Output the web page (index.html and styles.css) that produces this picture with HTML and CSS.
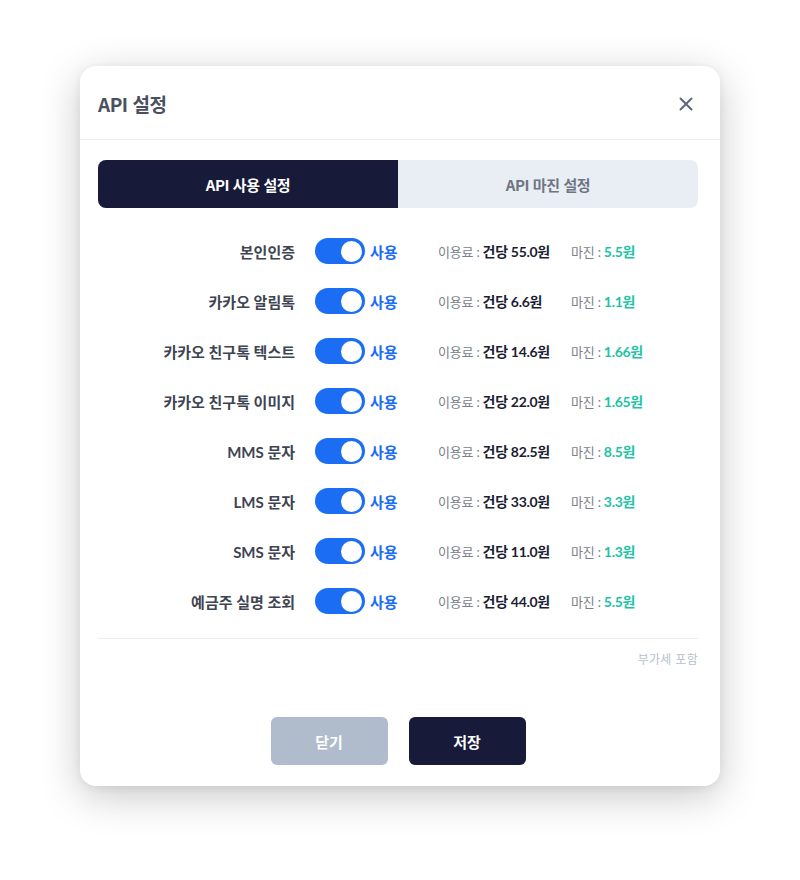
FILE: index.html
```html
<!DOCTYPE html>
<html lang="ko">
<head>
<meta charset="utf-8">
<link rel="stylesheet" href="styles.css">
</head>
<body>
<div class="page">
  <div class="modal">
    <div class="modal-header">
      <h2 class="modal-title">API 설정</h2>
      <button class="close-btn" aria-label="닫기">
        <svg width="14" height="14" viewBox="0 0 14 14"><path d="M1.5 1.5 L12.5 12.5 M12.5 1.5 L1.5 12.5" stroke="#5f6675" stroke-width="2" stroke-linecap="round" fill="none"/></svg>
      </button>
    </div>
    <div class="modal-body">
      <div class="tabs">
        <div class="tab active">API 사용 설정</div>
        <div class="tab">API 마진 설정</div>
      </div>
      <div class="rows">
        <div class="row"><span class="label">본인인증</span><span class="toggle"><span class="knob"></span></span><span class="status">사용</span><span class="fee"><span class="k">이용료 :</span> <b>건당 55.0원</b></span><span class="margin"><span class="k">마진 :</span> <b>5.5원</b></span></div>
        <div class="row"><span class="label">카카오 알림톡</span><span class="toggle"><span class="knob"></span></span><span class="status">사용</span><span class="fee"><span class="k">이용료 :</span> <b>건당 6.6원</b></span><span class="margin"><span class="k">마진 :</span> <b>1.1원</b></span></div>
        <div class="row"><span class="label">카카오 친구톡 텍스트</span><span class="toggle"><span class="knob"></span></span><span class="status">사용</span><span class="fee"><span class="k">이용료 :</span> <b>건당 14.6원</b></span><span class="margin"><span class="k">마진 :</span> <b>1.66원</b></span></div>
        <div class="row"><span class="label">카카오 친구톡 이미지</span><span class="toggle"><span class="knob"></span></span><span class="status">사용</span><span class="fee"><span class="k">이용료 :</span> <b>건당 22.0원</b></span><span class="margin"><span class="k">마진 :</span> <b>1.65원</b></span></div>
        <div class="row"><span class="label">MMS 문자</span><span class="toggle"><span class="knob"></span></span><span class="status">사용</span><span class="fee"><span class="k">이용료 :</span> <b>건당 82.5원</b></span><span class="margin"><span class="k">마진 :</span> <b>8.5원</b></span></div>
        <div class="row"><span class="label">LMS 문자</span><span class="toggle"><span class="knob"></span></span><span class="status">사용</span><span class="fee"><span class="k">이용료 :</span> <b>건당 33.0원</b></span><span class="margin"><span class="k">마진 :</span> <b>3.3원</b></span></div>
        <div class="row"><span class="label">SMS 문자</span><span class="toggle"><span class="knob"></span></span><span class="status">사용</span><span class="fee"><span class="k">이용료 :</span> <b>건당 11.0원</b></span><span class="margin"><span class="k">마진 :</span> <b>1.3원</b></span></div>
        <div class="row"><span class="label">예금주 실명 조회</span><span class="toggle"><span class="knob"></span></span><span class="status">사용</span><span class="fee"><span class="k">이용료 :</span> <b>건당 44.0원</b></span><span class="margin"><span class="k">마진 :</span> <b>5.5원</b></span></div>
      </div>
      <div class="note">부가세 포함</div>
      <div class="actions">
        <button class="btn btn-gray">닫기</button>
        <button class="btn btn-dark">저장</button>
      </div>
    </div>
  </div>
</div>
</body>
</html>
```

FILE: styles.css
```css
* { box-sizing: border-box; }
html, body {
  margin: 0;
  padding: 0;
  background: #ffffff;
  font-family: Lato, "Noto Sans CJK KR", sans-serif;
}
.page {
  width: 800px;
  height: 880px;
  padding-top: 66px;
  display: flex;
  justify-content: center;
  align-items: flex-start;
  background: #ffffff;
}
.modal {
  width: 640px;
  height: 720px;
  background: #ffffff;
  border-radius: 16px;
  box-shadow: 0 10px 40px rgba(0, 0, 0, 0.22), 0 2px 8px rgba(0,0,0,0.06);
  display: flex;
  flex-direction: column;
}
.modal-header {
  height: 74px;
  border-bottom: 1px solid #e9ecf1;
  display: flex;
  align-items: center;
  justify-content: space-between;
  padding: 2px 27px 0 18px;
}
.modal-title {
  margin: 0;
  font-family: "Noto Sans CJK KR", sans-serif;
  font-size: 19px;
  font-weight: 700;
  color: #4a505d;
  letter-spacing: -0.5px;
}
.close-btn {
  border: 0;
  background: none;
  padding: 0;
  width: 14px;
  height: 14px;
  display: flex;
  cursor: pointer;
}
.modal-body {
  flex: 1;
  padding: 20px 22px 21px 18px;
  display: flex;
  flex-direction: column;
}
.tabs {
  display: flex;
  height: 48px;
  border-radius: 8px;
  overflow: hidden;
  background: #e9eef5;
}
.tab {
  flex: 1;
  display: flex;
  align-items: center;
  justify-content: center;
  font-family: "Noto Sans CJK KR", sans-serif;
  font-size: 15px;
  font-weight: 700;
  color: #6e7582;
  letter-spacing: -0.4px;
}
.tab.active {
  background: #181a3a;
  color: #ffffff;
}
.rows {
  margin-top: 18px;
  padding-bottom: 12px;
  border-bottom: 1px solid #e9ecf1;
}
.row {
  height: 50px;
  display: flex;
  align-items: center;
}
.label {
  width: 197px;
  text-align: right;
  font-size: 15px;
  font-weight: 700;
  color: #3e4452;
}
.toggle {
  margin-left: 20px;
  width: 50px;
  height: 26px;
  border-radius: 13px;
  background: #1b6ef3;
  display: flex;
  align-items: center;
  justify-content: flex-end;
  padding-right: 3px;
}
.knob {
  width: 21px;
  height: 21px;
  border-radius: 50%;
  background: #ffffff;
}
.status {
  margin-left: 5px;
  width: 68px;
  font-size: 15px;
  font-weight: 700;
  color: #1b6ef3;
}
.fee, .margin {
  font-size: 13px;
  letter-spacing: -0.2px;
}
.fee { width: 133px; }
.k { color: #7b818d; }
.fee b, .margin b {
  font-size: 14px;
  font-weight: 700;
  letter-spacing: -0.3px;
}
.fee b { color: #1c1e33; }
.margin b { color: #1ec3a4; }
.note {
  margin-top: 11px;
  text-align: right;
  font-family: "Noto Sans CJK KR", sans-serif;
  font-size: 12px;
  letter-spacing: 0.3px;
  color: #b8bfca;
}
.actions {
  margin-top: auto;
  display: flex;
  justify-content: center;
  gap: 21px;
}
.btn {
  width: 117px;
  height: 48px;
  border: 0;
  border-radius: 6px;
  font-family: "Noto Sans CJK KR", sans-serif;
  font-size: 15px;
  font-weight: 700;
  color: #ffffff;
  cursor: pointer;
}
.btn-gray { background: #b0bccb; }
.btn-dark { background: #181a3a; }
```
